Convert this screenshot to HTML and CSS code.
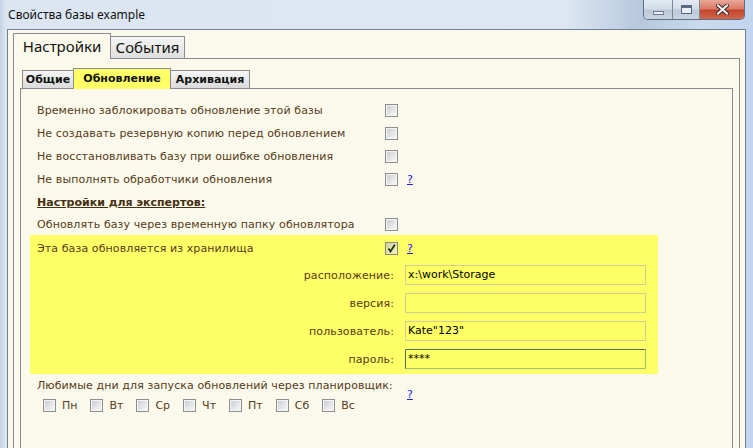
FILE: index.html
```html
<!DOCTYPE html>
<html lang="ru">
<head>
<meta charset="utf-8">
<title>Свойства базы example</title>
<link rel="stylesheet" href="styles.css">
</head>
<body>
<div class="window">
  <div class="titlebar">
    <span class="title">Свойства базы example</span>
    <div class="caption-buttons">
      <div class="capbtn capbtn-min"><span class="ico-min"></span></div>
      <div class="capbtn capbtn-max"><span class="ico-max"></span></div>
      <div class="capbtn capbtn-close">
        <svg width="13" height="11" viewBox="0 0 13 11"><path d="M2 1.5 L11 9.5 M11 1.5 L2 9.5" stroke="#3b2a2a" stroke-width="4" stroke-linecap="square"/><path d="M2 1.5 L11 9.5 M11 1.5 L2 9.5" stroke="#f4f4f4" stroke-width="2" stroke-linecap="square"/></svg>
      </div>
    </div>
  </div>
  <div class="frame">
    <div class="client">
      <div class="tabs">
        <div class="tab tab-active">Настройки</div>
        <div class="tab tab-events">События</div>
      </div>
      <div class="pane">
        <div class="subtabs">
          <div class="subtab st-general">Общие</div>
          <div class="subtab st-update subtab-active">Обновление</div>
          <div class="subtab st-archive">Архивация</div>
        </div>
        <div class="subpane">
          <div class="content">
            <div class="row"><span class="label">Временно заблокировать обновление этой базы</span><span class="cb"></span></div>
            <div class="row"><span class="label">Не создавать резервную копию перед обновлением</span><span class="cb"></span></div>
            <div class="row"><span class="label">Не восстановливать базу при ошибке обновления</span><span class="cb"></span></div>
            <div class="row"><span class="label">Не выполнять обработчики обновления</span><span class="cb"></span><a class="help" href="#">?</a></div>
            <div class="row row-heading"><span class="label heading">Настройки для экспертов:</span></div>
            <div class="row row-short"><span class="label">Обновлять базу через временную папку обновлятора</span><span class="cb"></span></div>
            <div class="highlight">
              <div class="row row-tall"><span class="label">Эта база обновляется из хранилища</span><span class="cb cb-checked"><svg width="9" height="9" viewBox="0 0 9 9"><path d="M1.5 4.5 L3.5 7.5 L7.8 0.8" fill="none" stroke="#1f2f12" stroke-width="1.7"/></svg></span><a class="help" href="#">?</a></div>
              <div class="field"><span class="flabel">расположение:</span><span class="input">x:\work\Storage</span></div>
              <div class="field"><span class="flabel">версия:</span><span class="input"></span></div>
              <div class="field"><span class="flabel">пользователь:</span><span class="input">Kate"123"</span></div>
              <div class="field"><span class="flabel">пароль:</span><span class="input input-focus">****</span></div>
            </div>
            <div class="favorites">
              <span class="label fav-label">Любимые дни для запуска обновлений через планировщик:</span>
              <a class="help fav-help" href="#">?</a>
              <div class="days">
                <span class="day"><span class="cb"></span>Пн</span>
                <span class="day"><span class="cb"></span>Вт</span>
                <span class="day"><span class="cb"></span>Ср</span>
                <span class="day"><span class="cb"></span>Чт</span>
                <span class="day"><span class="cb"></span>Пт</span>
                <span class="day"><span class="cb"></span>Сб</span>
                <span class="day"><span class="cb"></span>Вс</span>
              </div>
            </div>
          </div>
        </div>
      </div>
    </div>
  </div>
</div>
</body>
</html>
```
FILE: styles.css
```css
* { box-sizing: border-box; }
html, body { margin: 0; padding: 0; overflow: hidden; }
body {
  width: 753px;
  height: 448px;
  font-family: "DejaVu Sans", Verdana, sans-serif;
  font-size: 11px;
  background: #c8d7ea;
}
.window {
  width: 753px;
  height: 448px;
  display: flex;
  flex-direction: column;
  background: linear-gradient(to right, #c3d2e4 0px, #dbe6f2 6px, #dde7f3 75%, #b7c8dd 85%, #cadaec 93%, #c0d5ee 100%);
}
.titlebar {
  height: 29px;
  flex: none;
  display: flex;
  align-items: flex-start;
}
.title {
  font-family: "Noto Sans", "Open Sans", sans-serif;
  font-size: 12px;
  line-height: 30px;
  padding-left: 8px;
  color: #111;
}
.caption-buttons {
  margin-left: auto;
  margin-right: 8px;
  display: flex;
  height: 20px;
  border: 1px solid #5f6f86;
  border-top: none;
  border-radius: 0 0 5px 5px;
  overflow: hidden;
}
.capbtn {
  height: 19px;
  display: flex;
  align-items: center;
  justify-content: center;
}
.capbtn-min, .capbtn-max {
  background: linear-gradient(#e3eaf3, #d3dce8 45%, #bdc9d9 55%, #c9d4e2);
  border-right: 1px solid #7b8aa0;
}
.capbtn-min { width: 29px; }
.capbtn-max { width: 27px; }
.capbtn-close {
  width: 44px;
  background: linear-gradient(#e8a899, #d97b66 45%, #c5442c 55%, #d2674e);
}
.ico-min {
  width: 11px;
  height: 4px;
  margin-top: 6px;
  border: 1px solid #6f7d91;
  background: #e9eef4;
}
.ico-max {
  width: 11px;
  height: 9px;
  border: 1px solid #5a6a80;
  border-top-width: 3px;
  background: #e8eef5;
}
.frame {
  flex: 1;
  min-height: 0;
  display: flex;
  padding: 0 7px;
}
.client {
  flex: 1;
  border: 1px solid #6f7f96;
  border-bottom: none;
  background: #fbf9eb;
  padding: 3px 5px 0;
  overflow: hidden;
}
.tabs {
  display: flex;
  align-items: flex-end;
  height: 25px;
}
.tab {
  font-family: "Noto Sans", "Open Sans", sans-serif;
  font-size: 15px;
  color: #111;
  border: 1px solid #8a8c94;
  border-bottom: none;
  height: 22px;
  line-height: 20px;
  text-align: center;
  background: linear-gradient(#f6f6f6, #dedede);
}
.tab-active {
  width: 98px;
  height: 26px;
  line-height: 25px;
  margin-bottom: -1px;
  background: #fbf9eb;
  position: relative;
  z-index: 1;
}
.tab-events {
  width: 75px;
  margin-left: -1px;
}
.pane {
  width: 727px;
  height: 600px;
  border: 1px solid #8a8c94;
  padding: 9px 6px 0;
}
.subtabs {
  display: flex;
  align-items: flex-end;
  height: 20px;
  margin-left: 2px;
}
.subtab {
  height: 18px;
  line-height: 17px;
  border: 1px solid #8a8c94;
  border-bottom: none;
  font-weight: bold;
  color: #111;
  text-align: center;
  background: linear-gradient(#f6f6f6, #dadada);
}
.st-general { width: 52px; }
.st-update { width: 98px; margin-left: -1px; }
.st-archive { width: 80px; margin-left: -1px; }
.subtab-active {
  height: 21px;
  line-height: 19px;
  margin-bottom: -1px;
  background: #ffff66;
  position: relative;
  z-index: 1;
}
.subpane {
  height: 600px;
  border: 1px solid #8a8c94;
  padding: 10px 0 0 9px;
}
.content { width: 628px; }
.row {
  display: flex;
  align-items: center;
  height: 23px;
  padding-left: 7px;
}
.row-heading { height: 22px; }
.row-short { height: 22px; }
.row-tall { height: 26px; }
.label {
  width: 348px;
  flex: none;
  white-space: nowrap;
  color: #563b18;
  letter-spacing: 0.1px;
}
.heading {
  font-weight: bold;
  text-decoration: underline;
  color: #45300f;
  letter-spacing: 0;
}
.cb {
  width: 13px;
  height: 13px;
  flex: none;
  border: 1px solid #8e8f8f;
  padding: 1px;
  background: linear-gradient(135deg, #cbced3, #f8f8f8) content-box, #f4f4f4;
  display: inline-flex;
  align-items: center;
  justify-content: center;
}
.cb-checked {
  padding: 0;
  background: linear-gradient(135deg, #d3d49b, #f2f2c4);
  border-color: #8b8c7a;
}
.help {
  margin-left: 9px;
  color: #1a1aff;
  text-decoration: underline;
  font-size: 11px;
}
.highlight {
  background: #ffff66;
  padding-bottom: 5px;
}
.field {
  display: flex;
  align-items: center;
  height: 20px;
  margin-top: 8px;
  padding-left: 7px;
}
.row-tall + .field { margin-top: 4px; }
.flabel {
  width: 357px;
  text-align: right;
  color: #563b18;
  letter-spacing: 0.1px;
  white-space: nowrap;
}
.input {
  width: 241px;
  height: 20px;
  margin-left: 11px;
  border: 1px solid #cfcf9a;
  background: #ffff66;
  color: #000;
  padding-left: 2px;
  line-height: 18px;
  white-space: pre;
}
.input-focus {
  border-color: #50765f #9cc07e #9cc07e #50765f;
}
.favorites {
  display: grid;
  grid-template-columns: 361px auto;
  grid-template-rows: 22px 18px;
  align-items: center;
  padding-left: 7px;
}
.fav-label { width: auto; }
.fav-help {
  grid-column: 2;
  grid-row: 1 / 3;
}
.days {
  grid-column: 1;
  grid-row: 2;
  display: flex;
  align-items: center;
  padding-left: 6px;
  color: #563b18;
}
.day {
  display: inline-flex;
  align-items: center;
  gap: 6px;
  margin-right: 13px;
}
```
